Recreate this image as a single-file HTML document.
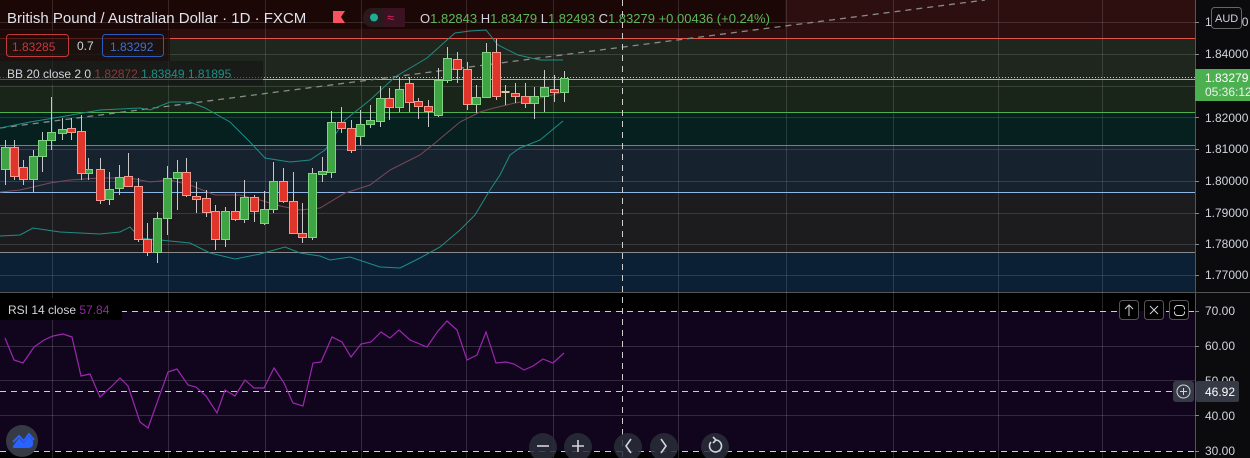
<!DOCTYPE html>
<html><head><meta charset="utf-8"><style>
html,body{margin:0;padding:0;background:#000;}
body{width:1250px;height:458px;overflow:hidden;position:relative;font-family:"Liberation Sans",sans-serif;}
svg{position:absolute;left:0;top:0;}
</style></head><body>
<svg width="1250" height="458" viewBox="0 0 1250 458" xmlns="http://www.w3.org/2000/svg" font-family="Liberation Sans, sans-serif">
<!-- bands -->
<rect x="0" y="0" width="1195" height="38" fill="#2d0f0f"/>
<rect x="0" y="38" width="1195" height="41" fill="#1e261d"/>
<rect x="0" y="79" width="1195" height="33" fill="#1a2519"/>
<rect x="0" y="112" width="1195" height="33" fill="#06201f"/>
<rect x="0" y="145" width="1195" height="47" fill="#16222e"/>
<rect x="0" y="192" width="1195" height="60" fill="#1c1c1f"/>
<rect x="0" y="252" width="1195" height="40" fill="#0b2035"/>
<!-- header strip -->
<rect x="0" y="0" width="785" height="29" fill="#1c0707"/>
<!-- grid -->
<g stroke="#ffffff" stroke-opacity="0.13" stroke-width="1">
<line x1="0" y1="22.5" x2="1195" y2="22.5"/><line x1="0" y1="54.5" x2="1195" y2="54.5"/><line x1="0" y1="86.5" x2="1195" y2="86.5"/><line x1="0" y1="117.5" x2="1195" y2="117.5"/><line x1="0" y1="149.5" x2="1195" y2="149.5"/><line x1="0" y1="181.5" x2="1195" y2="181.5"/><line x1="0" y1="213.5" x2="1195" y2="213.5"/><line x1="0" y1="244.5" x2="1195" y2="244.5"/><line x1="0" y1="275.5" x2="1195" y2="275.5"/>
<line x1="52.5" y1="0" x2="52.5" y2="458"/><line x1="168.5" y1="0" x2="168.5" y2="458"/><line x1="265.5" y1="0" x2="265.5" y2="458"/><line x1="361.5" y1="0" x2="361.5" y2="458"/><line x1="466.5" y1="0" x2="466.5" y2="458"/><line x1="553.5" y1="0" x2="553.5" y2="458"/><line x1="678.5" y1="0" x2="678.5" y2="458"/><line x1="786.5" y1="0" x2="786.5" y2="458"/><line x1="893.5" y1="0" x2="893.5" y2="458"/><line x1="998.5" y1="0" x2="998.5" y2="458"/><line x1="1102.5" y1="0" x2="1102.5" y2="458"/>
</g>
<!-- level lines -->
<line x1="0" y1="38.5" x2="1195" y2="38.5" stroke="#e0574c"/>
<line x1="0" y1="77.5" x2="1195" y2="77.5" stroke="#9fdc9f" stroke-dasharray="1,2"/>
<line x1="0" y1="79.5" x2="1195" y2="79.5" stroke="#7ccf7c"/>
<line x1="0" y1="112.5" x2="1195" y2="112.5" stroke="#4caf50"/>
<line x1="0" y1="145.5" x2="1195" y2="145.5" stroke="#26a69a"/>
<line x1="0" y1="192.5" x2="1195" y2="192.5" stroke="#8fb7e6"/>
<line x1="0" y1="252.5" x2="1195" y2="252.5" stroke="#8a8a8a"/>
<!-- trend dashed -->
<line x1="0" y1="128" x2="985" y2="0" stroke="#8a8a8a" stroke-width="1.3" stroke-dasharray="6,5"/>
<!-- bollinger -->
<polyline fill="none" stroke="#1e8e86" stroke-width="1" points="0,128 30,122 60,117 100,110 140,108 150,110 170,102 190,102 205,108 230,122 250,142 265,158 290,162 310,160 325,150 345,120 370,100 395,77 427,58 447,40 455,33 470,31 486,30 498,45 518,55 540,60 563,60"/>
<polyline fill="none" stroke="#7a4a5a" stroke-width="1" points="0,192 20,190 50,183 70,180 100,178 130,178 150,182 170,180 190,185 215,195 240,195 260,200 280,206 300,210 320,208 345,193 370,185 390,170 420,155 435,143 460,122 480,112 494,108 515,103 533,100 563,92"/>
<polyline fill="none" stroke="#1e8e86" stroke-width="1" points="0,236 20,235 33,228 60,232 100,234 120,232 130,227 140,238 170,241 190,243 210,253 235,259 260,254 285,247 300,253 320,256 330,260 350,257 380,267 400,268 420,258 440,247 460,230 475,215 490,190 500,175 510,155 520,148 540,140 563,121"/>
<!-- candles -->
<g stroke="#c8c8c8" stroke-width="1">
<line x1="5.5" y1="140" x2="5.5" y2="185"/><line x1="14.5" y1="140" x2="14.5" y2="180"/><line x1="23.5" y1="160" x2="23.5" y2="185"/><line x1="33.5" y1="150" x2="33.5" y2="192"/><line x1="42.5" y1="132" x2="42.5" y2="172"/><line x1="51.5" y1="97" x2="51.5" y2="150"/><line x1="62.5" y1="118" x2="62.5" y2="140"/><line x1="71.5" y1="118" x2="71.5" y2="140"/><line x1="81.5" y1="115" x2="81.5" y2="180"/><line x1="88.5" y1="158" x2="88.5" y2="180"/><line x1="100.5" y1="158" x2="100.5" y2="204"/><line x1="109.5" y1="172" x2="109.5" y2="205"/><line x1="119.5" y1="165" x2="119.5" y2="195"/><line x1="128.5" y1="153" x2="128.5" y2="187"/><line x1="138.5" y1="178" x2="138.5" y2="242"/><line x1="147.5" y1="223" x2="147.5" y2="256"/><line x1="157.5" y1="212" x2="157.5" y2="263"/><line x1="167.5" y1="166" x2="167.5" y2="235"/><line x1="177.5" y1="160" x2="177.5" y2="210"/><line x1="186.5" y1="158" x2="186.5" y2="197"/><line x1="196.5" y1="182" x2="196.5" y2="213"/><line x1="206.5" y1="190" x2="206.5" y2="217"/><line x1="215.5" y1="205" x2="215.5" y2="250"/><line x1="225.5" y1="207" x2="225.5" y2="247"/><line x1="235.5" y1="193" x2="235.5" y2="221"/><line x1="244.5" y1="180" x2="244.5" y2="223"/><line x1="254.5" y1="195" x2="254.5" y2="222"/><line x1="264.5" y1="191" x2="264.5" y2="225"/><line x1="273.5" y1="162" x2="273.5" y2="213"/><line x1="283.5" y1="168" x2="283.5" y2="203"/><line x1="293.5" y1="172" x2="293.5" y2="233"/><line x1="302.5" y1="203" x2="302.5" y2="243"/><line x1="312.5" y1="168" x2="312.5" y2="240"/><line x1="322.5" y1="157" x2="322.5" y2="182"/><line x1="331.5" y1="111" x2="331.5" y2="178"/><line x1="341.5" y1="107" x2="341.5" y2="133"/><line x1="351.5" y1="120" x2="351.5" y2="153"/><line x1="360.5" y1="110" x2="360.5" y2="145"/><line x1="370.5" y1="105" x2="370.5" y2="128"/><line x1="380.5" y1="86" x2="380.5" y2="127"/><line x1="389.5" y1="88" x2="389.5" y2="120"/><line x1="399.5" y1="78" x2="399.5" y2="112"/><line x1="409.5" y1="77" x2="409.5" y2="112"/><line x1="418.5" y1="98" x2="418.5" y2="119"/><line x1="428.5" y1="100" x2="428.5" y2="127"/><line x1="438.5" y1="68" x2="438.5" y2="117"/><line x1="447.5" y1="47" x2="447.5" y2="83"/><line x1="457.5" y1="52" x2="457.5" y2="83"/><line x1="467.5" y1="62" x2="467.5" y2="110"/><line x1="476.5" y1="85" x2="476.5" y2="113"/><line x1="486.5" y1="43" x2="486.5" y2="98"/><line x1="496.5" y1="39" x2="496.5" y2="100"/><line x1="505.5" y1="85" x2="505.5" y2="105"/><line x1="515.5" y1="83" x2="515.5" y2="103"/><line x1="525.5" y1="83" x2="525.5" y2="108"/><line x1="534.5" y1="87" x2="534.5" y2="119"/><line x1="544.5" y1="70" x2="544.5" y2="112"/><line x1="554.5" y1="75" x2="554.5" y2="102"/><line x1="564.5" y1="71" x2="564.5" y2="102"/>
</g>
<g fill="#3fa443" stroke="#7fd382" stroke-width="1">
<rect x="1.5" y="147.5" width="8" height="22"/><rect x="29.5" y="156.5" width="8" height="23"/><rect x="38.5" y="140.5" width="8" height="16"/><rect x="47.5" y="132.5" width="8" height="8"/><rect x="58.5" y="129.5" width="8" height="4"/><rect x="84.5" y="169.5" width="8" height="4"/><rect x="105.5" y="189.5" width="8" height="10"/><rect x="115.5" y="177.5" width="8" height="11"/><rect x="153.5" y="218.5" width="8" height="34"/><rect x="163.5" y="178.5" width="8" height="40"/><rect x="173.5" y="172.5" width="8" height="6"/><rect x="221.5" y="211.5" width="8" height="28"/><rect x="240.5" y="197.5" width="8" height="22"/><rect x="260.5" y="209.5" width="8" height="14"/><rect x="269.5" y="181.5" width="8" height="28"/><rect x="308.5" y="173.5" width="8" height="64"/><rect x="318.5" y="171.5" width="8" height="3"/><rect x="327.5" y="122.5" width="8" height="50"/><rect x="356.5" y="124.5" width="8" height="12"/><rect x="366.5" y="120.5" width="8" height="4"/><rect x="376.5" y="98.5" width="8" height="23"/><rect x="395.5" y="89.5" width="8" height="18"/><rect x="434.5" y="80.5" width="8" height="35"/><rect x="443.5" y="58.5" width="8" height="22"/><rect x="472.5" y="97.5" width="8" height="7"/><rect x="482.5" y="52.5" width="8" height="45"/><rect x="530.5" y="96.5" width="8" height="7"/><rect x="540.5" y="87.5" width="8" height="9"/><rect x="560.5" y="78.5" width="8" height="14"/>
</g>
<g fill="#e0352b" stroke="#f49a8f" stroke-width="1">
<rect x="10.5" y="147.5" width="8" height="29"/><rect x="19.5" y="167.5" width="8" height="12"/><rect x="67.5" y="128.5" width="8" height="4"/><rect x="77.5" y="131.5" width="8" height="42"/><rect x="96.5" y="169.5" width="8" height="31"/><rect x="124.5" y="176.5" width="8" height="10"/><rect x="134.5" y="186.5" width="8" height="53"/><rect x="143.5" y="239.5" width="8" height="13"/><rect x="182.5" y="172.5" width="8" height="23"/><rect x="192.5" y="196.5" width="8" height="3"/><rect x="202.5" y="198.5" width="8" height="14"/><rect x="211.5" y="211.5" width="8" height="28"/><rect x="231.5" y="211.5" width="8" height="8"/><rect x="250.5" y="197.5" width="8" height="14"/><rect x="279.5" y="181.5" width="8" height="20"/><rect x="289.5" y="201.5" width="8" height="32"/><rect x="298.5" y="233.5" width="8" height="4"/><rect x="337.5" y="122.5" width="8" height="6"/><rect x="347.5" y="128.5" width="8" height="22"/><rect x="385.5" y="98.5" width="8" height="9"/><rect x="405.5" y="83.5" width="8" height="19"/><rect x="414.5" y="101.5" width="8" height="5"/><rect x="424.5" y="106.5" width="8" height="5"/><rect x="453.5" y="59.5" width="8" height="10"/><rect x="463.5" y="69.5" width="8" height="35"/><rect x="492.5" y="52.5" width="8" height="44"/><rect x="511.5" y="93.5" width="8" height="3"/><rect x="521.5" y="96.5" width="8" height="7"/><rect x="550.5" y="89.5" width="8" height="3"/>
</g>
<rect x="501.5" y="91" width="8" height="2" fill="#e8c49a"/>
<!-- header text -->
<text x="7" y="23" font-size="15" fill="#e0e3eb">British Pound / Australian Dollar · 1D · FXCM</text>
<path d="M333 11 H345 L341 17 L345 23 H333 Z" fill="#f7525f"/>
<rect x="363" y="8" width="42" height="19" rx="9" fill="#2a1a1d"/>
<rect x="384" y="8" width="21" height="19" rx="0" fill="#3a1222"/>
<circle cx="374" cy="17.5" r="4" fill="#22ab94"/>
<text x="387" y="22" font-size="13" fill="#e91e63">≈</text>
<text x="420" y="23" font-size="13" fill="#d1d4dc">O<tspan fill="#5cb85c">1.82843</tspan> H<tspan fill="#5cb85c">1.83479</tspan> L<tspan fill="#5cb85c">1.82493</tspan> C<tspan fill="#5cb85c">1.83279</tspan> <tspan fill="#5cb85c">+0.00436 (+0.24%)</tspan></text>
<!-- legend boxes -->
<rect x="0" y="30" width="170" height="31" fill="#1a0808" fill-opacity="0.7"/>
<rect x="6.5" y="34.5" width="62" height="22" rx="3" fill="none" stroke="#c2393a"/>
<text x="12" y="51" font-size="12" fill="#c8363a">1.83285</text>
<text x="77" y="50" font-size="12" fill="#d1d4dc">0.7</text>
<rect x="102.5" y="34.5" width="61" height="22" rx="3" fill="none" stroke="#2a5cc0"/>
<text x="110" y="51" font-size="12" fill="#3b6fd6">1.83292</text>
<rect x="0" y="61" width="263" height="24" fill="#141414" fill-opacity="0.6"/>
<text x="7" y="78" font-size="12" fill="#d1d4dc">BB 20 close 2 0 <tspan fill="#8a3a3a">1.82872</tspan> <tspan fill="#1e8e86">1.83849</tspan> <tspan fill="#1e8e86">1.81895</tspan></text>
<!-- RSI pane -->
<rect x="0" y="292" width="1195" height="166" fill="#000"/>
<rect x="0" y="311" width="1195" height="140" fill="#10051c"/>
<line x1="0" y1="292.5" x2="1250" y2="292.5" stroke="#555"/>
<g stroke="#ffffff" stroke-opacity="0.15">
<line x1="0" y1="346.5" x2="1195" y2="346.5"/><line x1="0" y1="380.5" x2="1195" y2="380.5"/><line x1="0" y1="415.5" x2="1195" y2="415.5"/>
<line x1="52.5" y1="292" x2="52.5" y2="458"/><line x1="168.5" y1="292" x2="168.5" y2="458"/><line x1="265.5" y1="292" x2="265.5" y2="458"/><line x1="361.5" y1="292" x2="361.5" y2="458"/><line x1="466.5" y1="292" x2="466.5" y2="458"/><line x1="553.5" y1="292" x2="553.5" y2="458"/><line x1="678.5" y1="292" x2="678.5" y2="458"/><line x1="786.5" y1="292" x2="786.5" y2="458"/><line x1="893.5" y1="292" x2="893.5" y2="458"/><line x1="998.5" y1="292" x2="998.5" y2="458"/><line x1="1102.5" y1="292" x2="1102.5" y2="458"/>
</g>
<line x1="0" y1="311.5" x2="1195" y2="311.5" stroke="#cfcfcf" stroke-dasharray="6,5"/>
<line x1="0" y1="451.5" x2="1195" y2="451.5" stroke="#cfcfcf" stroke-dasharray="6,5"/>
<line x1="0" y1="391.5" x2="1195" y2="391.5" stroke="#cfcfcf" stroke-dasharray="6,5"/>
<line x1="622.5" y1="0" x2="622.5" y2="458" stroke="#cfcfcf" stroke-dasharray="6,5"/>
<polyline fill="none" stroke="#9c27b0" stroke-width="1.2" points="5,338 14,360 23,363 34,347 44,340 53,336 63,334 72,337 81,376 90,374 100,397 111,387 120,378 128,386 140,422 148,428 168,372 177,369 188,385 196,387 206,396 217,413 225,390 235,396 245,380 254,388 264,388 274,368 284,383 293,403 303,406 313,363 321,362 332,337 342,342 351,357 361,344 371,342 381,332 390,338 399,330 410,340 427,347 438,331 447,321 457,330 467,360 477,355 486,332 496,363 506,362 514,364 524,370 533,366 543,359 553,363 564,353"/>
<rect x="0" y="298" width="122" height="22" fill="#000"/>
<text x="8" y="314" font-size="12" fill="#d1d4dc">RSI 14 close <tspan fill="#8e2aa0">57.84</tspan></text>
<!-- pane buttons -->
<g fill="#000" stroke="#555" stroke-width="1">
<rect x="1119.5" y="300.5" width="19" height="19" rx="3"/><rect x="1144.5" y="300.5" width="19" height="19" rx="3"/><rect x="1169.5" y="300.5" width="19" height="19" rx="3"/>
</g>
<path d="M1129 316 V305 M1125 309 L1129 305 L1133 309" stroke="#d1d4dc" fill="none"/>
<path d="M1150 306 L1158 314 M1158 306 L1150 314" stroke="#d1d4dc"/>
<rect x="1174.5" y="305.5" width="10" height="10" rx="3" fill="none" stroke="#d1d4dc"/>
<line x1="1174" y1="310.5" x2="1185" y2="310.5" stroke="#000" stroke-width="2"/>
<!-- bottom controls -->
<circle cx="22" cy="441" r="16" fill="#363a45"/>
<path d="M13 446 L19 438 L24 443 L29 436 L33 441 Q34 448 28 448 H15 Q12 448 13 446 Z" fill="#2962ff"/>
<path d="M13 442 L19 436 L24 441 L29 434 L34 440" stroke="#2962ff" stroke-width="2" fill="none"/>
<g fill="#2a2e39" fill-opacity="0.85">
<circle cx="543" cy="447" r="14"/><circle cx="578" cy="447" r="14"/><circle cx="628" cy="447" r="14"/><circle cx="664" cy="447" r="14"/><circle cx="715" cy="447" r="14"/>
</g>
<g stroke="#d1d4dc" stroke-width="1.6" fill="none">
<path d="M537 446 H549"/><path d="M572 446 H584 M578 440 V452"/><path d="M631 439 L626 446 L631 453"/><path d="M661 439 L666 446 L661 453"/>
<path d="M711 442 A6 6 0 1 0 716 440 M713 437 L716 440 L713 443"/>
</g>
<!-- right axis -->
<rect x="1195" y="0" width="55" height="292" fill="#0b0b0e"/>
<rect x="1195" y="293" width="55" height="165" fill="#0b0b0e"/>
<line x1="1195.5" y1="0" x2="1195.5" y2="458" stroke="#555"/>
<g font-size="12" fill="#d1d4dc">
<text x="1205" y="26">1.85000</text>
<text x="1205" y="58">1.84000</text>
<text x="1205" y="122">1.82000</text>
<text x="1205" y="153">1.81000</text>
<text x="1205" y="185">1.80000</text>
<text x="1205" y="217">1.79000</text>
<text x="1205" y="248">1.78000</text>
<text x="1205" y="279">1.77000</text>
<text x="1205" y="315">70.00</text>
<text x="1205" y="350">60.00</text>
<text x="1205" y="385">50.00</text>
<text x="1205" y="420">40.00</text>
<text x="1205" y="455">30.00</text>
</g>
<g stroke="#888"><line x1="1195" y1="22.5" x2="1199" y2="22.5"/><line x1="1195" y1="54.5" x2="1199" y2="54.5"/><line x1="1195" y1="117.5" x2="1199" y2="117.5"/><line x1="1195" y1="149.5" x2="1199" y2="149.5"/><line x1="1195" y1="181.5" x2="1199" y2="181.5"/><line x1="1195" y1="213.5" x2="1199" y2="213.5"/><line x1="1195" y1="244.5" x2="1199" y2="244.5"/><line x1="1195" y1="275.5" x2="1199" y2="275.5"/><line x1="1195" y1="311.5" x2="1199" y2="311.5"/><line x1="1195" y1="346.5" x2="1199" y2="346.5"/><line x1="1195" y1="415.5" x2="1199" y2="415.5"/><line x1="1195" y1="451.5" x2="1199" y2="451.5"/></g>
<rect x="1211.5" y="7.5" width="30" height="21" rx="3" fill="#0b0b0e" stroke="#666"/>
<text x="1215" y="22" font-size="11" fill="#d1d4dc">AUD</text>
<rect x="1195" y="69" width="55" height="32" fill="#4caf50"/>
<text x="1205" y="82" font-size="12" fill="#ffffff">1.83279</text>
<text x="1205" y="96" font-size="12" fill="#e8f5e9">05:36:12</text>
<rect x="1173" y="381" width="21" height="21" rx="3" fill="#363a45"/>
<circle cx="1183.5" cy="391.5" r="6.5" fill="none" stroke="#d1d4dc"/>
<path d="M1183.5 388 V395 M1180 391.5 H1187" stroke="#d1d4dc"/>
<rect x="1196" y="381" width="43" height="21" rx="2" fill="#363a45"/>
<text x="1205" y="396" font-size="12" fill="#ffffff">46.92</text>
</svg>
</body></html>
